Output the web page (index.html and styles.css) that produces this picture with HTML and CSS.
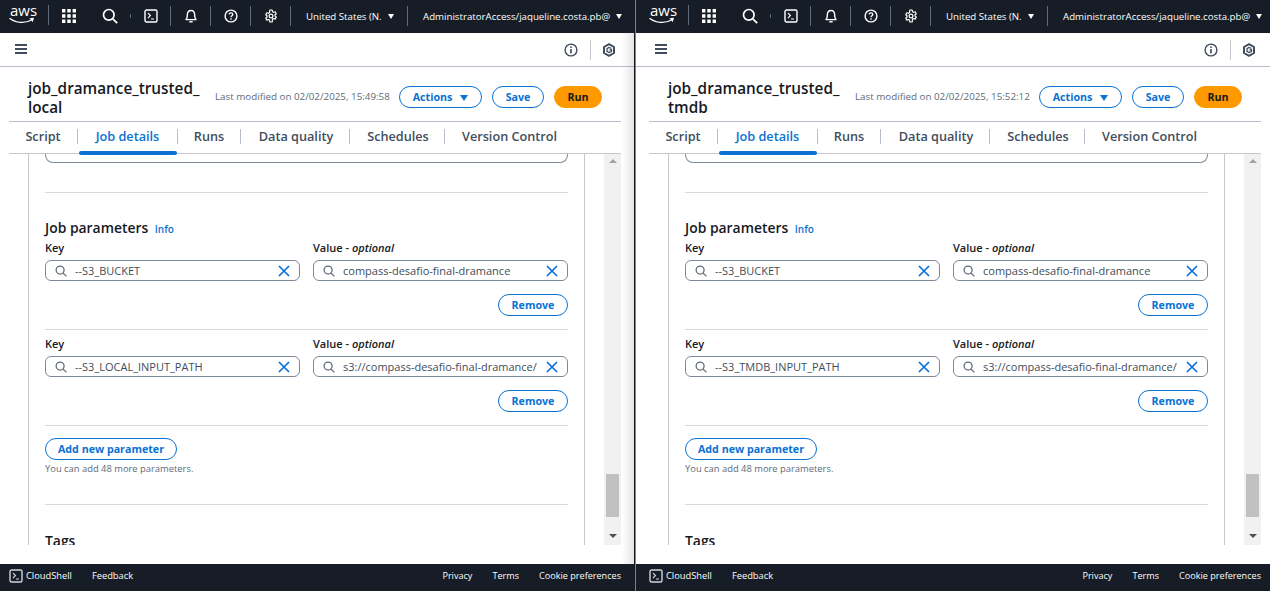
FILE: index.html
```html
<!DOCTYPE html>
<html lang="en">
<head>
    <meta charset="UTF-8">
    <title>AWS Glue jobs</title>
    <link rel="stylesheet" href="styles.css">
</head>
<body>
<svg class="sprite" xmlns="http://www.w3.org/2000/svg">
    <symbol id="i-apps" viewBox="0 0 14 14">
        <path d="M0 0h3.4v3.4H0zM5.3 0h3.4v3.4H5.3zM10.6 0H14v3.4h-3.4zM0 5.3h3.4v3.4H0zM5.3 5.3h3.4v3.4H5.3zM10.6 5.3H14v3.4h-3.4zM0 10.6h3.4V14H0zM5.3 10.6h3.4V14H5.3zM10.6 10.6H14V14h-3.4z" fill="currentColor"/>
    </symbol>
    <symbol id="i-search" viewBox="0 0 16 16">
        <circle cx="6.8" cy="6.8" r="5.3" fill="none" stroke="currentColor" stroke-width="1.7"/>
        <path d="M10.8 10.8l4.4 4.4" fill="none" stroke="currentColor" stroke-width="1.7"/>
    </symbol>
    <symbol id="i-shell" viewBox="0 0 14 14">
        <rect x="1" y="1" width="12" height="12" rx="1.5" fill="none" stroke="currentColor" stroke-width="1.4"/>
        <path d="M4 4.2l2.4 2.4L4 9M7 10h3" fill="none" stroke="currentColor" stroke-width="1.2"/>
    </symbol>
    <symbol id="i-bell" viewBox="0 0 14 14">
        <path d="M2 10.6c1-1 1.3-2 1.3-4.2C3.300 3.600 4.800 1.500 7 1.500s3.700 2.100 3.700 4.900c0 2.200.3 3.200 1.300 4.200z" fill="none" stroke="currentColor" stroke-width="1.4" stroke-linejoin="round"/>
        <path d="M5.300 12.800h3.400" fill="none" stroke="currentColor" stroke-width="1.4"/>
    </symbol>
    <symbol id="i-help" viewBox="0 0 14 14">
        <circle cx="7" cy="7" r="5.900" fill="none" stroke="currentColor" stroke-width="1.400"/>
        <path d="M5.200 5.600c0-1.100.8-1.800 1.800-1.800s1.800.7 1.800 1.600c0 1.300-1.800 1.400-1.800 2.800" fill="none" stroke="currentColor" stroke-width="1.300"/>
        <path d="M6.300 9.300h1.400v1.400H6.300z" fill="currentColor"/>
    </symbol>
    <symbol id="i-gear" viewBox="0 0 14 14">
        <path d="M5.800 1h2.400l.3 1.700 1 .6 1.600-.6 1.200 2-1.300 1.100v1.200l1.300 1.100-1.200 2-1.600-.6-1 .6L8.200 13H5.800l-.3-1.900-1-.6-1.600.6-1.200-2 1.300-1.100V6.800L1.700 5.700l1.200-2 1.600.6 1-.6z" fill="none" stroke="currentColor" stroke-width="1.200" stroke-linejoin="round"/>
        <circle cx="7" cy="7" r="1.900" fill="none" stroke="currentColor" stroke-width="1.200"/>
    </symbol>
    <symbol id="i-smile" viewBox="0 0 26 8">
        <path d="M.5 1.200C7 6.200 16 6.800 23 2.800" fill="none" stroke="currentColor" stroke-width="1.300"/>
        <path d="M20.500 1.300l4.500-.5-1.300 4.200z" fill="currentColor"/>
    </symbol>
    <symbol id="i-info" viewBox="0 0 14 14">
        <circle cx="7" cy="7" r="5.900" fill="none" stroke="currentColor" stroke-width="1.400"/>
        <path d="M6.200 6h1.600v4.600H6.200zM6.200 3.400h1.600V5H6.200z" fill="currentColor"/>
    </symbol>
    <symbol id="i-hex" viewBox="0 0 14 14">
        <path d="M7 1.200l5 2.800v6l-5 2.800L2 10V4z" fill="none" stroke="currentColor" stroke-width="2" stroke-linejoin="round"/>
        <path d="M9.500 5.500L7 4.500 5 5.600v2.800l2 1.100 2.500-1V7H7.500" fill="none" stroke="currentColor" stroke-width="1.300"/>
    </symbol>
    <symbol id="i-clear" viewBox="0 0 12 12">
        <path d="M1 1l10 10M11 1L1 11" fill="none" stroke="currentColor" stroke-width="1.700"/>
    </symbol>
</svg>

<div class="screen">
    <section class="pane pane-left">
        <header class="topnav">
            <div class="inner topnav-row">
                <div class="nav-cell nav-logo">
                    <span class="logo-text">aws</span>
                    <svg class="logo-smile"><use href="#i-smile"/></svg>
                </div>
                <div class="nav-cell nav-apps"><svg class="icon-apps"><use href="#i-apps"/></svg></div>
                <div class="nav-cell nav-search"><svg class="icon-search"><use href="#i-search"/></svg></div>
                <div class="nav-cell sep"><svg class="icon-nav"><use href="#i-shell"/></svg></div>
                <div class="nav-cell sep"><svg class="icon-nav"><use href="#i-bell"/></svg></div>
                <div class="nav-cell sep"><svg class="icon-nav"><use href="#i-help"/></svg></div>
                <div class="nav-cell sep"><svg class="icon-nav"><use href="#i-gear"/></svg></div>
                <div class="nav-menu nav-region sep"><span>United States (N.</span><i class="caret"></i></div>
                <div class="nav-menu nav-account"><span>AdministratorAccess/jaqueline.costa.pb@</span><i class="caret"></i></div>
            </div>
        </header>

        <div class="subbar">
            <div class="inner subbar-row">
                <div class="burger"><i></i><i></i><i></i></div>
                <svg class="sub-icon sub-info"><use href="#i-info"/></svg>
                <span class="sub-sep"></span>
                <svg class="sub-icon sub-hex"><use href="#i-hex"/></svg>
            </div>
        </div>

        <div class="inner">
            <div class="job-head">
                <h1 class="job-title">job_dramance_trusted_<br>local</h1>
                <span class="job-modified">Last modified on 02/02/2025, 15:49:58</span>
                <button class="btn btn-actions">Actions<i class="caret caret-blue"></i></button>
                <button class="btn btn-save">Save</button>
                <button class="btn btn-run">Run</button>
            </div>

            <nav class="tabs">
                <a class="tab tab-script">Script</a>
                <a class="tab tab-details active">Job details</a>
                <a class="tab tab-runs">Runs</a>
                <a class="tab tab-quality">Data quality</a>
                <a class="tab tab-schedules">Schedules</a>
                <a class="tab tab-version">Version Control</a>
            </nav>

            <div class="content">
                <div class="form-col">
                    <div class="clipped-box"></div>
                    <hr class="rule rule-first">
                    <h2 class="section-title">Job parameters <a class="info-link">Info</a></h2>

                    <div class="param-row">
                        <div class="field">
                            <div class="label">Key</div>
                            <div class="input"><svg class="input-search"><use href="#i-search"/></svg><span class="input-text">--S3_BUCKET</span><svg class="input-clear"><use href="#i-clear"/></svg></div>
                        </div>
                        <div class="field">
                            <div class="label">Value - <em>optional</em></div>
                            <div class="input"><svg class="input-search"><use href="#i-search"/></svg><span class="input-text">compass-desafio-final-dramance</span><svg class="input-clear"><use href="#i-clear"/></svg></div>
                        </div>
                    </div>
                    <div class="remove-row"><button class="btn btn-remove">Remove</button></div>
                    <hr class="rule rule-param">

                    <div class="param-row">
                        <div class="field">
                            <div class="label">Key</div>
                            <div class="input"><svg class="input-search"><use href="#i-search"/></svg><span class="input-text">--S3_LOCAL_INPUT_PATH</span><svg class="input-clear"><use href="#i-clear"/></svg></div>
                        </div>
                        <div class="field">
                            <div class="label">Value - <em>optional</em></div>
                            <div class="input"><svg class="input-search"><use href="#i-search"/></svg><span class="input-text">s3://compass-desafio-final-dramance/</span><svg class="input-clear"><use href="#i-clear"/></svg></div>
                        </div>
                    </div>
                    <div class="remove-row"><button class="btn btn-remove">Remove</button></div>
                    <hr class="rule rule-param">

                    <button class="btn btn-add">Add new parameter</button>
                    <p class="helper">You can add 48 more parameters.</p>
                    <hr class="rule rule-tags">
                    <h2 class="section-title section-tags">Tags</h2>
                </div>
                <div class="scrollbar">
                    <i class="arrow arrow-up"></i>
                    <i class="thumb"></i>
                    <i class="arrow arrow-down"></i>
                </div>
            </div>
        </div>

        <footer class="footer">
            <div class="inner footer-row">
                <svg class="foot-shell"><use href="#i-shell"/></svg>
                <a class="foot-link foot-cloud">CloudShell</a>
                <a class="foot-link foot-feedback">Feedback</a>
                <a class="foot-link foot-legal foot-privacy">Privacy</a>
                <a class="foot-link foot-legal foot-terms">Terms</a>
                <a class="foot-link foot-legal">Cookie preferences</a>
            </div>
        </footer>
    </section>

    <div class="divider"></div>

    <section class="pane pane-right">
        <header class="topnav">
            <div class="inner topnav-row">
                <div class="nav-cell nav-logo">
                    <span class="logo-text">aws</span>
                    <svg class="logo-smile"><use href="#i-smile"/></svg>
                </div>
                <div class="nav-cell nav-apps"><svg class="icon-apps"><use href="#i-apps"/></svg></div>
                <div class="nav-cell nav-search"><svg class="icon-search"><use href="#i-search"/></svg></div>
                <div class="nav-cell sep"><svg class="icon-nav"><use href="#i-shell"/></svg></div>
                <div class="nav-cell sep"><svg class="icon-nav"><use href="#i-bell"/></svg></div>
                <div class="nav-cell sep"><svg class="icon-nav"><use href="#i-help"/></svg></div>
                <div class="nav-cell sep"><svg class="icon-nav"><use href="#i-gear"/></svg></div>
                <div class="nav-menu nav-region sep"><span>United States (N.</span><i class="caret"></i></div>
                <div class="nav-menu nav-account"><span>AdministratorAccess/jaqueline.costa.pb@</span><i class="caret"></i></div>
            </div>
        </header>

        <div class="subbar">
            <div class="inner subbar-row">
                <div class="burger"><i></i><i></i><i></i></div>
                <svg class="sub-icon sub-info"><use href="#i-info"/></svg>
                <span class="sub-sep"></span>
                <svg class="sub-icon sub-hex"><use href="#i-hex"/></svg>
            </div>
        </div>

        <div class="inner">
            <div class="job-head">
                <h1 class="job-title">job_dramance_trusted_<br>tmdb</h1>
                <span class="job-modified">Last modified on 02/02/2025, 15:52:12</span>
                <button class="btn btn-actions">Actions<i class="caret caret-blue"></i></button>
                <button class="btn btn-save">Save</button>
                <button class="btn btn-run">Run</button>
            </div>

            <nav class="tabs">
                <a class="tab tab-script">Script</a>
                <a class="tab tab-details active">Job details</a>
                <a class="tab tab-runs">Runs</a>
                <a class="tab tab-quality">Data quality</a>
                <a class="tab tab-schedules">Schedules</a>
                <a class="tab tab-version">Version Control</a>
            </nav>

            <div class="content">
                <div class="form-col">
                    <div class="clipped-box"></div>
                    <hr class="rule rule-first">
                    <h2 class="section-title">Job parameters <a class="info-link">Info</a></h2>

                    <div class="param-row">
                        <div class="field">
                            <div class="label">Key</div>
                            <div class="input"><svg class="input-search"><use href="#i-search"/></svg><span class="input-text">--S3_BUCKET</span><svg class="input-clear"><use href="#i-clear"/></svg></div>
                        </div>
                        <div class="field">
                            <div class="label">Value - <em>optional</em></div>
                            <div class="input"><svg class="input-search"><use href="#i-search"/></svg><span class="input-text">compass-desafio-final-dramance</span><svg class="input-clear"><use href="#i-clear"/></svg></div>
                        </div>
                    </div>
                    <div class="remove-row"><button class="btn btn-remove">Remove</button></div>
                    <hr class="rule rule-param">

                    <div class="param-row">
                        <div class="field">
                            <div class="label">Key</div>
                            <div class="input"><svg class="input-search"><use href="#i-search"/></svg><span class="input-text">--S3_TMDB_INPUT_PATH</span><svg class="input-clear"><use href="#i-clear"/></svg></div>
                        </div>
                        <div class="field">
                            <div class="label">Value - <em>optional</em></div>
                            <div class="input"><svg class="input-search"><use href="#i-search"/></svg><span class="input-text">s3://compass-desafio-final-dramance/</span><svg class="input-clear"><use href="#i-clear"/></svg></div>
                        </div>
                    </div>
                    <div class="remove-row"><button class="btn btn-remove">Remove</button></div>
                    <hr class="rule rule-param">

                    <button class="btn btn-add">Add new parameter</button>
                    <p class="helper">You can add 48 more parameters.</p>
                    <hr class="rule rule-tags">
                    <h2 class="section-title section-tags">Tags</h2>
                </div>
                <div class="scrollbar">
                    <i class="arrow arrow-up"></i>
                    <i class="thumb"></i>
                    <i class="arrow arrow-down"></i>
                </div>
            </div>
        </div>

        <footer class="footer">
            <div class="inner footer-row">
                <svg class="foot-shell"><use href="#i-shell"/></svg>
                <a class="foot-link foot-cloud">CloudShell</a>
                <a class="foot-link foot-feedback">Feedback</a>
                <a class="foot-link foot-legal foot-privacy">Privacy</a>
                <a class="foot-link foot-legal foot-terms">Terms</a>
                <a class="foot-link foot-legal">Cookie preferences</a>
            </div>
        </footer>
    </section>
</div>
</body>
</html>
```

FILE: styles.css
```css
* {
    box-sizing: border-box;
}

html, body {
    margin: 0;
    height: 100%;
    overflow: hidden;
}

body {
    font-family: "Open Sans", "Noto Sans", "Liberation Sans", sans-serif;
    color: #16191f;
    background: #ffffff;
}

.sprite {
    position: absolute;
    width: 0;
    height: 0;
}

.screen {
    display: flex;
    width: 1270px;
    height: 591px;
}

.pane {
    position: relative;
    width: 634px;
    height: 591px;
    display: flex;
    flex-direction: column;
    background: #ffffff;
}

/* both windows hold the same 630px page, the left one has 4px spare on its right */
.inner {
    width: 630px;
}

.pane-right .inner {
    margin-left: 4px;
}

/* soft shadow at the edge of the left window */
.pane-left::after {
    content: "";
    position: absolute;
    top: 33px;
    right: 0;
    bottom: 27px;
    width: 12px;
    background: linear-gradient(to right, rgba(0, 0, 0, 0), rgba(0, 0, 0, 0.1));
}

.divider {
    width: 2px;
    height: 591px;
    background: linear-gradient(to right, #16191f 50%, #2aa5b3 50%);
}

/* top nav */
.topnav {
    height: 33px;
    background: #161d26;
    color: #ffffff;
    flex: none;
}

.topnav-row {
    display: flex;
    align-items: center;
    height: 32px;
    font-size: 9.700px;
    font-weight: 500;
}

.nav-cell {
    position: relative;
    width: 40px;
    height: 20px;
    display: flex;
    align-items: center;
    justify-content: center;
    flex: none;
}

.sep {
    border-right: 1px solid #5f6b7a;
}

.nav-logo {
    width: 49px;
    border-right: 1px solid #5f6b7a;
    display: block;
    margin-top: -2px;
}

.logo-text {
    display: block;
    margin-left: 10px;
    margin-top: -3px;
    font-family: "Open Sans", sans-serif;
    font-size: 15px;
    line-height: 17px;
    color: #ffffff;
}

.logo-smile {
    display: block;
    width: 26px;
    height: 8px;
    margin: -2px 0 0 9px;
}

.nav-apps {
    width: 39px;
}

.nav-search {
    width: 43px;
}

.nav-search::after {
    content: "";
    position: absolute;
    right: 0;
    top: 8px;
    height: 4px;
    border-right: 1px solid #5f6b7a;
}

.icon-apps {
    width: 14px;
    height: 14px;
}

.icon-search {
    width: 16px;
    height: 16px;
}

.icon-nav {
    width: 14px;
    height: 14px;
}

.nav-menu {
    height: 20px;
    display: flex;
    align-items: center;
    white-space: nowrap;
    flex: none;
}

.nav-region {
    width: 117px;
    padding-left: 15px;
}

.nav-account {
    padding-left: 15px;
}

.caret {
    display: inline-block;
    width: 0;
    height: 0;
    border-left: 3.500px solid transparent;
    border-right: 3.500px solid transparent;
    border-top: 5px solid #ffffff;
    margin-left: 6px;
}

/* secondary bar */
.subbar {
    height: 34px;
    border-bottom: 1px solid #b6bec9;
    flex: none;
}

.subbar-row {
    display: flex;
    align-items: center;
    height: 33px;
}

.burger {
    width: 12px;
    margin-left: 15px;
}

.burger i {
    display: block;
    height: 2px;
    margin-bottom: 2px;
    background: #414d5c;
}

.sub-icon {
    width: 14px;
    height: 14px;
    color: #414d5c;
    flex: none;
}

.sub-info {
    margin-left: 537px;
}

.sub-sep {
    width: 1px;
    height: 20px;
    margin-left: 12px;
    background: #c6c6cd;
    flex: none;
}

.sub-hex {
    margin-left: 11px;
}

/* job header */
.job-head {
    display: flex;
    align-items: center;
    height: 55px;
    margin-left: 9px;
    width: 612px;
    padding: 6px 0 0 19px;
    border-bottom: 1px solid #b6bec9;
}

.job-title {
    width: 187px;
    margin: 2px 0 0;
    font-size: 15.300px;
    line-height: 19px;
    font-weight: 600;
    flex: none;
}

.job-modified {
    width: 184px;
    margin-bottom: 2px;
    font-size: 9.800px;
    color: #5f6b7a;
    white-space: nowrap;
    flex: none;
}

.btn {
    height: 22px;
    padding: 0;
    font-family: inherit;
    font-size: 10.700px;
    font-weight: 700;
    line-height: 18px;
    color: #0972d3;
    background: #ffffff;
    border: 1px solid #0972d3;
    border-radius: 11px;
    flex: none;
}

.btn-actions {
    width: 83px;
}

.caret-blue {
    border-left-width: 4.500px;
    border-right-width: 4.500px;
    border-top: 6px solid #0972d3;
    margin-left: 8px;
}

.btn-save {
    width: 52px;
    margin-left: 10px;
}

.btn-run {
    width: 48px;
    margin-left: 10px;
    color: #16191f;
    background: #ff9900;
    border-color: #ff9900;
}

/* tabs */
.tabs {
    display: flex;
    align-items: center;
    height: 32px;
    width: 612px;
    margin-left: 9px;
    padding-bottom: 2px;
    border-bottom: 1px solid #c6c6cd;
    position: relative;
}

.tab {
    position: relative;
    height: 15px;
    line-height: 15px;
    font-size: 12.700px;
    font-weight: 600;
    color: #414d5c;
    text-align: center;
    border-right: 1px solid #b6bec9;
    white-space: nowrap;
    flex: none;
}

.tab-script {
    width: 69px;
}

.tab-details {
    width: 100px;
}

.tab-runs {
    width: 63px;
}

.tab-quality {
    width: 109px;
    padding-left: 2px;
}

.tab-schedules {
    width: 95px;
    padding-left: 2px;
}

.tab-version {
    width: 128px;
    padding-left: 17px;
    text-align: left;
    border-right: 0;
}

.tab.active {
    color: #0972d3;
}

.tab.active::after {
    content: "";
    position: absolute;
    left: 1px;
    right: 0;
    bottom: -11px;
    height: 4px;
    border-radius: 2px;
    background: #0972d3;
}

/* scrolled area */
.content {
    display: flex;
    height: 391px;
    width: 612px;
    margin-left: 9px;
    overflow: hidden;
}

.form-col {
    width: 557px;
    margin-left: 19px;
    padding: 0 16px;
    border-left: 1px solid #c6c6cd;
    border-right: 1px solid #c6c6cd;
    flex: none;
    overflow: hidden;
}

.clipped-box {
    height: 10px;
    margin-top: -1px;
    border: 1px solid #7d8998;
    border-top: 0;
    border-radius: 0 0 8px 8px;
}

.rule {
    height: 1px;
    margin: 0;
    border: 0;
    background: #d5dbdb;
}

.rule-first {
    margin-top: 29px;
}

.section-title {
    margin: 25px 0 0;
    font-size: 13.900px;
    line-height: 19px;
    font-weight: 600;
    color: #16191f;
}

.info-link {
    margin-left: 3px;
    font-size: 10px;
    font-weight: 600;
    color: #0972d3;
}

.param-row {
    display: flex;
    gap: 13px;
    margin-top: 1px;
}

.rule-param + .param-row {
    margin-top: 6px;
}

.field {
    width: 255px;
    flex: none;
}

.label {
    font-size: 11px;
    line-height: 15px;
    font-weight: 600;
    color: #16191f;
    margin-bottom: 5px;
}

.label em {
    font-style: italic;
}

.input {
    display: flex;
    align-items: center;
    height: 21px;
    padding: 0 9px;
    border: 1px solid #7d8998;
    border-radius: 6px;
    background: #ffffff;
}

.input-search {
    width: 12px;
    height: 12px;
    color: #5f6b7a;
    flex: none;
}

.input-text {
    margin-left: 8px;
    font-size: 11px;
    color: #414d5c;
    white-space: nowrap;
    flex: 1;
}

.input-clear {
    width: 12px;
    height: 12px;
    color: #0972d3;
    flex: none;
}

.remove-row {
    display: flex;
    justify-content: flex-end;
    margin-top: 13px;
}

.btn-remove {
    width: 70px;
    height: 22px;
}

.rule-param {
    margin-top: 13px;
}

.btn-add {
    display: block;
    width: 132px;
    margin-top: 12px;
}

.helper {
    margin: 2px 0 0;
    font-size: 9.400px;
    line-height: 14px;
    color: #5f6b7a;
}

.rule-tags {
    margin-top: 28px;
}

.section-tags {
    margin-top: 26px;
}

/* scrollbar */
.scrollbar {
    position: relative;
    width: 17px;
    margin-left: 19px;
    background: #f1f1f1;
    flex: none;
}

.thumb {
    position: absolute;
    left: 2px;
    right: 2px;
    top: 320px;
    height: 43px;
    background: #c1c1c1;
}

.arrow {
    position: absolute;
    left: 4.500px;
    width: 0;
    height: 0;
    border-left: 4px solid transparent;
    border-right: 4px solid transparent;
}

.arrow-up {
    top: 5px;
    border-bottom: 4px solid #a3a3a3;
}

.arrow-down {
    bottom: 7px;
    border-top: 4px solid #505050;
}

/* footer */
.footer {
    margin-top: auto;
    height: 27px;
    background: #161d26;
    flex: none;
}

.footer-row {
    display: flex;
    align-items: center;
    height: 27px;
    padding: 0 9px 5px 0;
    font-size: 9.300px;
    color: #ffffff;
}

.foot-shell {
    width: 14px;
    height: 14px;
    margin: 2px 0 0 9px;
    color: #d1d5db;
    flex: none;
}

.foot-link {
    color: #ffffff;
    white-space: nowrap;
}

.foot-legal {
    font-size: 9.100px;
}

.foot-cloud {
    margin-left: 3px;
}

.foot-feedback {
    margin-left: 20px;
    margin-right: auto;
}

.foot-privacy {
    margin-right: 20px;
}

.foot-terms {
    margin-right: 20px;
}
```
